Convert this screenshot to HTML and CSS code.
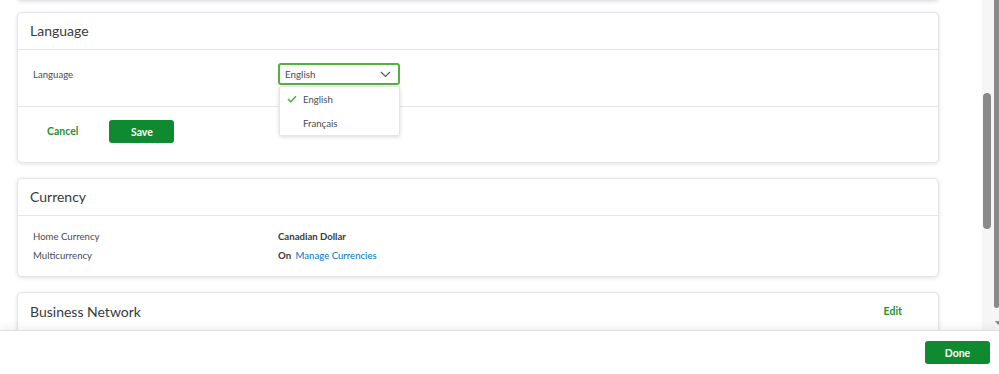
FILE: index.html
```html
<html>
<head>
<title>Account and Settings</title>
<link rel="stylesheet" href="styles.css">
</head>
<body>
<div class="app">
    <div class="viewport">
        <div class="scroll-area">
            <div class="card card-prev"></div>

            <!-- 语言 -->
            <div class="card">
                <div class="card-head"><h2>Language</h2></div>
                <div class="card-body lang-body">
                    <div class="row">
                        <span class="label">Language</span>
                        <div class="select-wrap">
                            <div class="select">
                                <span>English</span>
                                <svg width="11" height="7" viewBox="0 0 11 7"><polyline points="1,1 5.5,5.5 10,1" fill="none" stroke="#5a5b60" stroke-width="1.2"/></svg>
                            </div>
                            <ul class="menu">
                                <li class="checked"><svg width="10" height="8" viewBox="0 0 10 8"><polyline points="1,4 3.8,6.8 9,1.2" fill="none" stroke="#3fae2a" stroke-width="1.3"/></svg>English</li>
                                <li>Français</li>
                            </ul>
                        </div>
                    </div>
                </div>
                <div class="card-foot">
                    <a class="link-green">Cancel</a>
                    <button class="btn">Save</button>
                </div>
            </div>

            <!-- 货币 -->
            <div class="card">
                <div class="card-head"><h2>Currency</h2></div>
                <div class="card-body info">
                    <span class="label">Home Currency</span>
                    <span class="value"><b>Canadian Dollar</b></span>
                    <span class="label">Multicurrency</span>
                    <span class="value"><b>On</b> <a class="link-blue">Manage Currencies</a></span>
                </div>
            </div>

            <div class="card">
                <div class="card-head head-edit"><h2>Business Network</h2><a class="link-green">Edit</a></div>
                <div class="card-body filler"></div>
            </div>
        </div>
        <div class="inner-track"><div class="inner-thumb"></div></div>
        <div class="outer-track"><div class="outer-thumb"></div><div class="outer-arrow"></div></div>
    </div>
    <div class="footer">
        <button class="btn btn-done">Done</button>
    </div>
</div>
</body>
</html>
```

FILE: styles.css
```css
*{
    padding:0;
    margin:0;
    box-sizing:border-box;
    list-style:none;
}

body{
    font-family:Lato, "Liberation Sans", sans-serif;
    color:#393a3d;
    background:#fff;
}

.app{
    width:999px;
    height:374px;
    display:flex;
    flex-direction:column;
    overflow:hidden;
}

/* 可滚动区域 */
.viewport{
    height:330px;
    display:flex;
    overflow:hidden;
}

.scroll-area{
    flex:1;
    padding:0 43px 0 17px;
    background:#fff;
}

.card{
    background:#fff;
    border:1px solid #e3e5e8;
    border-radius:5px;
    box-shadow:0 1px 4px rgba(0,0,0,0.12);
    margin-bottom:15px;
}

.card-prev{
    height:20px;
    margin-top:-19px;
    margin-bottom:11px;
}

.card-head{
    height:37px;
    border-bottom:1px solid #e3e5e8;
    display:flex;
    align-items:center;
    padding:0 12px 1px;
}

.card-head h2{
    font-size:14px;
    font-weight:400;
    color:#393a3d;
}

.head-edit{
    justify-content:space-between;
    padding-right:36px;
    border-bottom:none;
}

.card-body{
    padding:13px 15px;
}

.lang-body{
    height:57px;
    border-bottom:1px solid #e3e5e8;
}

.row{
    display:grid;
    grid-template-columns:245px 122px;
    align-items:center;
    height:22px;
}

.label{
    font-size:9.6px;
    color:#4a4b50;
}

.select-wrap{
    position:relative;
}

.select{
    height:22px;
    border:2px solid #53b13f;
    border-radius:3px;
    display:flex;
    align-items:center;
    justify-content:space-between;
    padding:0 7px 0 5px;
    font-size:9.8px;
    color:#4a4b50;
}

/* 下拉菜单 */
.menu{
    position:absolute;
    left:1px;
    top:23px;
    width:121px;
    background:#fff;
    border:1px solid #e3e5e8;
    border-radius:2px;
    box-shadow:0 1px 4px rgba(0,0,0,0.15);
    z-index:2;
}

.menu li{
    height:24px;
    display:flex;
    align-items:center;
    padding-left:23px;
    font-size:9.6px;
    color:#4a4b50;
}

.menu li.checked{
    padding-left:7px;
}

.menu li svg{
    margin-right:6px;
}

.card-foot{
    height:55px;
    display:flex;
    align-items:flex-start;
    padding:13px 0 0 29px;
    gap:31px;
}

.link-green{
    color:#1f9232;
    font-size:10.5px;
    font-weight:700;
}

.card-foot .link-green{
    line-height:23px;
}

.btn{
    height:23px;
    width:65px;
    border:none;
    border-radius:3px;
    background:#108a30;
    color:#fff;
    font-family:Lato, "Liberation Sans", sans-serif;
    font-size:10.5px;
    font-weight:700;
}

.info{
    display:grid;
    grid-template-columns:245px 1fr;
    row-gap:4px;
    padding:13px 15px 13px;
    line-height:15px;
}

.value{
    font-size:9.6px;
    color:#393a3d;
}

.link-blue{
    color:#0077c5;
    margin-left:2px;
}

.filler{
    height:40px;
}

/* 滚动条 */
.inner-track{
    width:12px;
    background:#f6f6f6;
    padding:93px 0 0 1px;
}

.inner-thumb{
    width:8px;
    height:136px;
    border-radius:4px;
    background:#8a8a8a;
}

.outer-track{
    width:5px;
    background:#f6f6f6;
}

.outer-thumb{
    height:308px;
    background:#8a8a8a;
    border-radius:0 0 3px 3px;
}

.outer-arrow{
    margin:13px 0 0 1px;
    width:0;
    height:0;
    border-left:3px solid transparent;
    border-right:3px solid transparent;
    border-top:4px solid #8a8a8a;
}

/* 底部 */
.footer{
    height:44px;
    border-top:1px solid #e0e0e0;
    box-shadow:0 -3px 8px rgba(0,0,0,0.06);
    background:#fff;
    display:flex;
    justify-content:flex-end;
    padding:10px 9px 0 0;
    position:relative;
}
```
